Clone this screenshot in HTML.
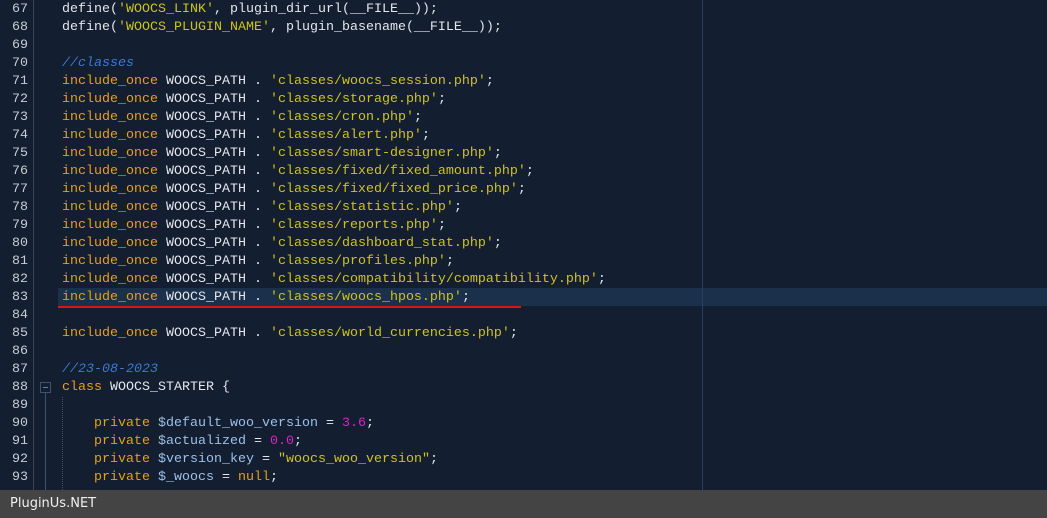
<!DOCTYPE html>
<html><head><meta charset="utf-8"><style>
html,body{margin:0;padding:0;width:1047px;height:518px;overflow:hidden;background:#131e31;}
.wrap{position:relative;width:1047px;height:518px;font-family:"Liberation Mono",monospace;font-size:13.33px;}
.gut{position:absolute;left:33px;top:0;width:1px;height:490px;background:#3a4558;}
.rm{position:absolute;left:702px;top:0;width:1px;height:490px;background:#2a3f5c;}
.hl{position:absolute;left:58px;top:288px;width:989px;height:18px;background:#1b304a;}
.ul{position:absolute;left:58px;top:306px;width:463px;height:2px;background:#d41818;}
.ln{position:absolute;left:0;width:28px;text-align:right;color:#c8ccd4;height:18px;line-height:18px;}
.cd{position:absolute;left:62px;height:18px;line-height:18px;white-space:pre;color:#e4e6ea;}
.k{color:#e8a010}.s{color:#cfc414}.c{color:#3a7ad0;font-style:italic}.v{color:#9cc0e8}.n{color:#e020c8}
.fold{position:absolute;left:40px;top:382px;width:9px;height:9px;border:1px solid #3d5270;}
.fold:after{content:"";position:absolute;left:2px;top:4px;width:5px;height:1px;background:#6a7f9c;}
.fl{position:absolute;left:45px;top:393px;width:1px;height:97px;background:#3d5270;}
.dot{position:absolute;left:62px;top:397px;height:93px;border-left:1px dotted #3d5270;}
.bar{position:absolute;left:0;top:490px;width:1047px;height:28px;background:#444444;color:#f0f0f0;font-family:"DejaVu Sans","Liberation Sans",sans-serif;font-size:13px;line-height:28px;padding-left:10px;box-sizing:border-box;}
</style></head><body><div class="wrap">
<div class="hl"></div><div class="gut"></div><div class="rm"></div><div class="ul"></div>
<div class="fold"></div><div class="fl"></div><div class="dot"></div>
<div class="ln" style="top:1px">67</div><div class="cd" style="top:1px">define(<span class="s">'WOOCS_LINK'</span>, plugin_dir_url(__FILE__));</div>
<div class="ln" style="top:19px">68</div><div class="cd" style="top:19px">define(<span class="s">'WOOCS_PLUGIN_NAME'</span>, plugin_basename(__FILE__));</div>
<div class="ln" style="top:37px">69</div>
<div class="ln" style="top:55px">70</div><div class="cd c" style="top:55px">//classes</div>
<div class="ln" style="top:73px">71</div><div class="cd" style="top:73px"><span class="k">include_once</span> WOOCS_PATH . <span class="s">'classes/woocs_session.php'</span>;</div>
<div class="ln" style="top:91px">72</div><div class="cd" style="top:91px"><span class="k">include_once</span> WOOCS_PATH . <span class="s">'classes/storage.php'</span>;</div>
<div class="ln" style="top:109px">73</div><div class="cd" style="top:109px"><span class="k">include_once</span> WOOCS_PATH . <span class="s">'classes/cron.php'</span>;</div>
<div class="ln" style="top:127px">74</div><div class="cd" style="top:127px"><span class="k">include_once</span> WOOCS_PATH . <span class="s">'classes/alert.php'</span>;</div>
<div class="ln" style="top:145px">75</div><div class="cd" style="top:145px"><span class="k">include_once</span> WOOCS_PATH . <span class="s">'classes/smart-designer.php'</span>;</div>
<div class="ln" style="top:163px">76</div><div class="cd" style="top:163px"><span class="k">include_once</span> WOOCS_PATH . <span class="s">'classes/fixed/fixed_amount.php'</span>;</div>
<div class="ln" style="top:181px">77</div><div class="cd" style="top:181px"><span class="k">include_once</span> WOOCS_PATH . <span class="s">'classes/fixed/fixed_price.php'</span>;</div>
<div class="ln" style="top:199px">78</div><div class="cd" style="top:199px"><span class="k">include_once</span> WOOCS_PATH . <span class="s">'classes/statistic.php'</span>;</div>
<div class="ln" style="top:217px">79</div><div class="cd" style="top:217px"><span class="k">include_once</span> WOOCS_PATH . <span class="s">'classes/reports.php'</span>;</div>
<div class="ln" style="top:235px">80</div><div class="cd" style="top:235px"><span class="k">include_once</span> WOOCS_PATH . <span class="s">'classes/dashboard_stat.php'</span>;</div>
<div class="ln" style="top:253px">81</div><div class="cd" style="top:253px"><span class="k">include_once</span> WOOCS_PATH . <span class="s">'classes/profiles.php'</span>;</div>
<div class="ln" style="top:271px">82</div><div class="cd" style="top:271px"><span class="k">include_once</span> WOOCS_PATH . <span class="s">'classes/compatibility/compatibility.php'</span>;</div>
<div class="ln" style="top:289px">83</div><div class="cd" style="top:289px"><span class="k">include_once</span> WOOCS_PATH . <span class="s">'classes/woocs_hpos.php'</span>;</div>
<div class="ln" style="top:307px">84</div>
<div class="ln" style="top:325px">85</div><div class="cd" style="top:325px"><span class="k">include_once</span> WOOCS_PATH . <span class="s">'classes/world_currencies.php'</span>;</div>
<div class="ln" style="top:343px">86</div>
<div class="ln" style="top:361px">87</div><div class="cd c" style="top:361px">//23-08-2023</div>
<div class="ln" style="top:379px">88</div><div class="cd" style="top:379px"><span class="k">class</span> WOOCS_STARTER {</div>
<div class="ln" style="top:397px">89</div>
<div class="ln" style="top:415px">90</div><div class="cd" style="top:415px">    <span class="k">private</span> <span class="v">$default_woo_version</span> = <span class="n">3.6</span>;</div>
<div class="ln" style="top:433px">91</div><div class="cd" style="top:433px">    <span class="k">private</span> <span class="v">$actualized</span> = <span class="n">0.0</span>;</div>
<div class="ln" style="top:451px">92</div><div class="cd" style="top:451px">    <span class="k">private</span> <span class="v">$version_key</span> = <span class="s">"woocs_woo_version"</span>;</div>
<div class="ln" style="top:469px">93</div><div class="cd" style="top:469px">    <span class="k">private</span> <span class="v">$_woocs</span> = <span class="k">null</span>;</div>
<div class="bar">PluginUs.NET</div>
</div></body></html>
